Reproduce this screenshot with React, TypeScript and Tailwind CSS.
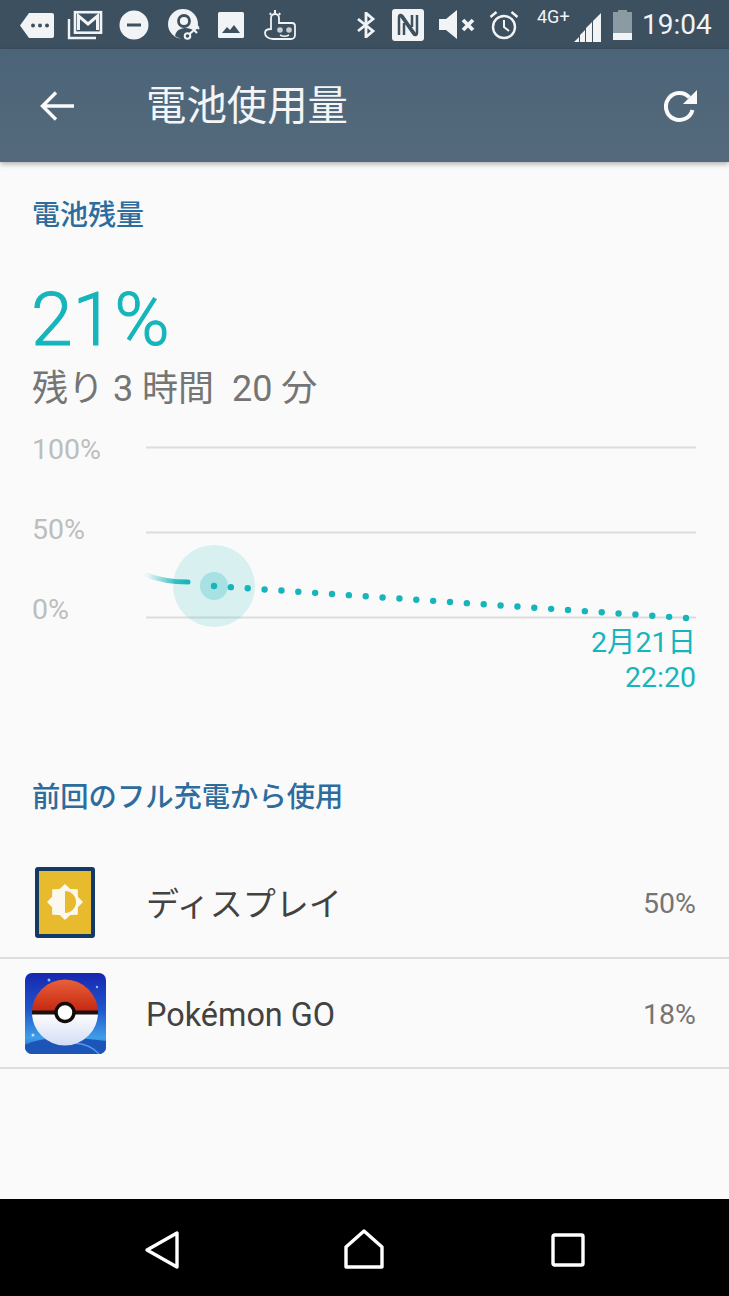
import React from 'react';

const jp = 'font-["Roboto","Noto_Sans_CJK_JP",sans-serif]';

const StatusIcons = () => (
  <div className="flex items-center h-full">
    {/* notification overflow tag */}
    <svg width="36" height="28" viewBox="0 0 36 28" className="ml-[19px]">
      <path d="M10 2h23a2 2 0 0 1 2 2v21a2 2 0 0 1-2 2H10L1 14.500z" fill="#f1f3f4" />
      <circle cx="14" cy="14.500" r="2" fill="#3c5060" />
      <circle cx="21" cy="14.500" r="2" fill="#3c5060" />
      <circle cx="28" cy="14.500" r="2" fill="#3c5060" />
    </svg>
    {/* gmail stack */}
    <svg width="36" height="30" viewBox="0 0 36 30" className="ml-[12px]">
      <path d="M2 9v19h27" fill="none" stroke="#f1f3f4" strokeWidth="2.400" />
      <rect x="8" y="2.200" width="26" height="20.500" fill="none" stroke="#f1f3f4" strokeWidth="2.600" />
      <path d="M11.500 20V6l9.500 8 9.500-8v14" fill="none" stroke="#f1f3f4" strokeWidth="3" />
    </svg>
    {/* do not disturb */}
    <svg width="30" height="30" viewBox="0 0 30 30" className="ml-[16px]">
      <circle cx="15" cy="15" r="14.500" fill="#f1f3f4" />
      <rect x="8" y="13.500" width="14" height="3" fill="#3c5060" />
    </svg>
    {/* account key */}
    <svg width="34" height="32" viewBox="0 0 34 32" className="ml-[18px]">
      <circle cx="16" cy="15" r="15" fill="#f1f3f4" />
      <circle cx="17" cy="12" r="5.500" fill="#f1f3f4" stroke="#3c5060" strokeWidth="2.800" />
      <path d="M8 27c1-6 6-8 11-8 3 0 5 1 7 2l8-4v15H18z" fill="#3c5060" />
      <circle cx="20.500" cy="27" r="2.800" fill="none" stroke="#f1f3f4" strokeWidth="2" />
      <path d="M22.500 25l9-8M27 21l3 3M30 18l2 2" fill="none" stroke="#f1f3f4" strokeWidth="2.200" />
    </svg>
    {/* picture */}
    <svg width="26" height="26" viewBox="0 0 26 26" className="ml-[17px]">
      <rect width="26" height="26" rx="1.500" fill="#f1f3f4" />
      <path d="M4 21l5-6 3 3 4-5 6 8z" fill="#3c5060" />
    </svg>
    {/* pointing hand mascot */}
    <svg width="32" height="32" viewBox="0 0 32 32" className="ml-[20px]">
      <path d="M7 20V9a4 4 0 0 1 8 0v5h13a3 3 0 0 1 3 3v9a4 4 0 0 1-4 4H9c-5 0-8-3-8-6s3-4 6-4z" fill="none" stroke="#f1f3f4" strokeWidth="1.800" />
      <circle cx="16" cy="21" r="2.800" fill="#c9d0d4" />
      <circle cx="25" cy="21" r="2.800" fill="#c9d0d4" />
      <path d="M16 26c2.500 1.500 6.500 1.500 9 0" fill="none" stroke="#f1f3f4" strokeWidth="1.500" />
      <path d="M6 4l1 2M11 1v3M16 4l-1 2" fill="none" stroke="#f1f3f4" strokeWidth="2" />
    </svg>
    {/* bluetooth */}
    <svg width="20" height="26" viewBox="0 0 20 26" className="ml-[60px]">
      <path d="M2 7l15 12-7 6V1l7 6L2 19" fill="none" stroke="#f1f3f4" strokeWidth="2.800" />
    </svg>
    {/* NFC */}
    <svg width="32" height="32" viewBox="0 0 32 32" className="ml-[16px]">
      <rect width="32" height="32" rx="3" fill="#f1f3f4" />
      <path d="M7 26V8c0-2 2-3 3.500-1L23 25M25 6v18c0 2-2 3-3.500 1L9 7M12 26V14M20 6v12" fill="none" stroke="#3c5060" strokeWidth="2.500" />
    </svg>
    {/* muted */}
    <svg width="36" height="30" viewBox="0 0 36 30" className="ml-[15px]">
      <path d="M0 9h7l11-9v29L7 20H0z" fill="#f1f3f4" />
      <path d="M24 10l10 10M34 10L24 20" stroke="#f1f3f4" strokeWidth="3.800" />
    </svg>
    {/* alarm */}
    <svg width="30" height="30" viewBox="0 0 30 30" className="ml-[14px]">
      <circle cx="15" cy="17" r="11" fill="none" stroke="#f1f3f4" strokeWidth="2.400" />
      <path d="M15 10v7l5 4" fill="none" stroke="#f1f3f4" strokeWidth="2" />
      <path d="M1.500 7l6-5M28.500 7l-6-5" stroke="#f1f3f4" strokeWidth="2.400" />
    </svg>
    <div className="relative ml-[18px] w-[30px] self-stretch">
      <span className={`absolute left-0 top-[7px] text-[18px] leading-[20px] text-[#f1f3f4] ${jp}`}>4G+</span>
    </div>
    {/* signal */}
    <svg width="28" height="29" viewBox="0 0 28 29" className="mt-[5px] ml-[7px]">
      <path d="M0 29l5-5v5zM6 29v-7l5-5v12zM12 29V15l6-6v20zM19 29V8l8-8v29z" fill="#f1f3f4" />
    </svg>
    {/* battery */}
    <svg width="19" height="30" viewBox="0 0 19 30" className="ml-[11px]">
      <path d="M5 0h9v2h5v28H0V2h5z" fill="#8b9aa3" />
      <path d="M0 23h19v7H0z" fill="#f1f3f4" />
    </svg>
    <span className="ml-[10px] text-[28px] leading-none text-[#f1f3f4] font-['Roboto',sans-serif]">19:04</span>
  </div>
);

const Chart = () => {
  // remaining-time projection, one dot every 17px or so
  const dots = Array.from({ length: 29 }, (_, i) => {
    const t = i / 28;
    return { x: 68 + 472 * t, y: 146 + 32 * t };
  });
  return (
    <svg width="583" height="190" viewBox="0 0 583 190" className="overflow-visible">
      <defs>
        <linearGradient id="tail" x1="0" x2="1" y1="0" y2="0">
          <stop offset="0" stopColor="#15b5bb" stopOpacity="0.05" />
          <stop offset="0.7" stopColor="#15b5bb" stopOpacity="0.85" />
          <stop offset="1" stopColor="#15b5bb" />
        </linearGradient>
      </defs>
      <path d="M0 7.500h550M0 92.500h550M0 177.500h550" stroke="#dcdcdc" strokeWidth="2" />
      <path d="M1 135c12 5 24 7 41 7" fill="none" stroke="url(#tail)" strokeWidth="5" strokeLinecap="round" />
      <circle cx="68" cy="146" r="41" fill="#15b5bb" fillOpacity="0.14" />
      <circle cx="68" cy="146" r="14" fill="#15b5bb" fillOpacity="0.25" />
      {dots.map((d) => (
        <circle key={d.x} cx={d.x} cy={d.y} r="3.200" fill="#15b5bb" />
      ))}
    </svg>
  );
};

const DisplayIcon = () => {
  // eight pointed sun
  const sun = Array.from({ length: 16 }, (_, i) => {
    const a = (i * Math.PI) / 8;
    const r = i % 2 === 0 ? 18 : 14;
    return `${30 + r * Math.sin(a)},${35 - r * Math.cos(a)}`;
  }).join(' ');
  return (
    <svg width="60" height="71" viewBox="0 0 60 71">
      <rect x="2" y="2" width="56" height="67" rx="1" fill="#e8bb2e" stroke="#123a64" strokeWidth="4" />
      <polygon points={sun} fill="#fbf8ee" />
      <path d="M30 24a11 11 0 0 1 0 22z" fill="#e8bb2e" />
    </svg>
  );
};

const PokemonIcon = () => (
  <svg width="81" height="81" viewBox="0 0 81 81">
    <defs>
      <linearGradient id="sky" x1="0" x2="0" y1="0" y2="1">
        <stop offset="0" stopColor="#1727b0" />
        <stop offset="0.45" stopColor="#1f55cc" />
        <stop offset="0.8" stopColor="#3f9ee8" />
        <stop offset="1" stopColor="#1a5cc0" />
      </linearGradient>
      <linearGradient id="red" x1="0" x2="0" y1="0" y2="1">
        <stop offset="0" stopColor="#e8603a" />
        <stop offset="1" stopColor="#c4260f" />
      </linearGradient>
      <linearGradient id="white" x1="0" x2="0" y1="0" y2="1">
        <stop offset="0" stopColor="#ffffff" />
        <stop offset="1" stopColor="#d3dcf4" />
      </linearGradient>
    </defs>
    <rect width="81" height="81" rx="7" fill="url(#sky)" />
    <circle cx="24" cy="7" r="1.500" fill="#8fc0f5" />
    <circle cx="72" cy="14" r="1.200" fill="#8fc0f5" />
    <circle cx="8" cy="62" r="1.500" fill="#bfe0fa" />
    <path d="M0 72c14-8 44-9 81-4v6a7 7 0 0 1-7 7H7a7 7 0 0 1-7-6z" fill="#1c54b8" />
    <path d="M50 70c10 1 18 4 24 11" fill="none" stroke="#4f9be6" strokeWidth="1.500" />
    <path d="M7 39.500a33 33 0 0 1 66 0z" fill="url(#red)" />
    <path d="M7 39.500a33 33 0 0 0 66 0z" fill="url(#white)" />
    <rect x="7" y="37.500" width="66" height="4" fill="#1c1010" />
    <circle cx="40" cy="39.500" r="9" fill="#fff" stroke="#120c0c" strokeWidth="3.500" />
  </svg>
);

export default function App() {
  return (
    <div className={`flex h-[1296px] w-[729px] flex-col overflow-hidden bg-[#fafafa] ${jp}`}>
      <div className="h-[49px] shrink-0 bg-[#3c5060]">
        <StatusIcons />
      </div>
      <header className="z-10 flex h-[113px] shrink-0 items-center bg-gradient-to-b from-[#4c6478] to-[#546a7c] shadow-[0_2px_5px_rgba(0,0,0,0.3)]">
        <svg width="34" height="30" viewBox="0 0 34 30" className="ml-[40px]">
          <path d="M34 15H3M16 1.500L2.500 15 16 28.500" fill="none" stroke="#fafafa" strokeWidth="3.400" />
        </svg>
        <h1 className="ml-[72px] mt-[3px] text-[40.4px] leading-none text-[#f3f5f6]">電池使用量</h1>
        <svg width="34" height="34" viewBox="0 0 34 34" className="ml-auto mr-[31px]">
          <path d="M28.500 21a13.500 13.500 0 1 1-3-12.500" fill="none" stroke="#fafafa" strokeWidth="4" />
          <path d="M33 1v14H19z" fill="#fafafa" />
        </svg>
      </header>

      <main className="flex flex-1 flex-col">
        <h2 className="ml-[32px] mt-[37px] text-[28px] font-medium leading-[34px] text-[#2d6c9c]">電池残量</h2>
        <div className="ml-[31px] mt-[44px] text-[75px] font-light leading-[84px] text-[#15b5bb] [-webkit-text-stroke:1px_#15b5bb]">21%</div>
        <div className="ml-[32px] mt-[6px] text-[36px] leading-[44px] text-[#757575]">残り 3 時間&nbsp; 20 分</div>

        <div className="mt-[29px] flex">
          <div className="flex w-[146px] flex-col pl-[32px] text-[28.5px] leading-[32px] text-[#bdbdbd]">
            <span className="mt-[-6px]">100%</span>
            <span className="mt-[48px]">50%</span>
            <span className="mt-[48px]">0%</span>
          </div>
          <Chart />
        </div>
        <div className="mt-[-5px] mr-[33px] text-right text-[28.5px] leading-[35px] text-[#15b5bb]">
          <div>2月21日</div>
          <div>22:20</div>
        </div>

        <h2 className="ml-[32px] mt-[86px] text-[28.3px] font-medium leading-[34px] text-[#2d6c9c]">前回のフル充電から使用</h2>

        <div className="mt-[32px] flex h-[112px] items-center border-b-2 border-[#dedede]">
          <div className="ml-[35px] w-[111px]">
            <DisplayIcon />
          </div>
          <span className="mt-[4px] text-[33px] leading-none text-[#424242]">ディスプレイ</span>
          <span className="ml-auto mr-[33px] mt-[4px] text-[28.5px] text-[#757575]">50%</span>
        </div>
        <div className="flex h-[110px] items-center border-b-2 border-[#dedede]">
          <div className="ml-[25px] w-[121px]">
            <PokemonIcon />
          </div>
          <span className="mt-[4px] text-[32.4px] leading-none text-[#424242]">Pokémon GO</span>
          <span className="ml-auto mr-[33px] mt-[4px] text-[28.5px] text-[#757575]">18%</span>
        </div>
      </main>

      <nav className="flex h-[97px] shrink-0 items-center bg-black pl-[144px] pt-[5px]">
        <svg width="36" height="40" viewBox="0 0 36 40">
          <path d="M33 3v34L3 20z" fill="none" stroke="#fff" strokeWidth="3.400" strokeLinejoin="round" />
        </svg>
        <svg width="42" height="42" viewBox="0 0 42 42" className="ml-[163px]">
          <path d="M21 2l18 16v20H3V18z" fill="none" stroke="#fff" strokeWidth="3.400" strokeLinejoin="round" />
        </svg>
        <svg width="34" height="34" viewBox="0 0 34 34" className="ml-[166px]">
          <rect x="2" y="2" width="30" height="30" rx="1.500" fill="none" stroke="#fff" strokeWidth="3.400" />
        </svg>
      </nav>
    </div>
  );
}
